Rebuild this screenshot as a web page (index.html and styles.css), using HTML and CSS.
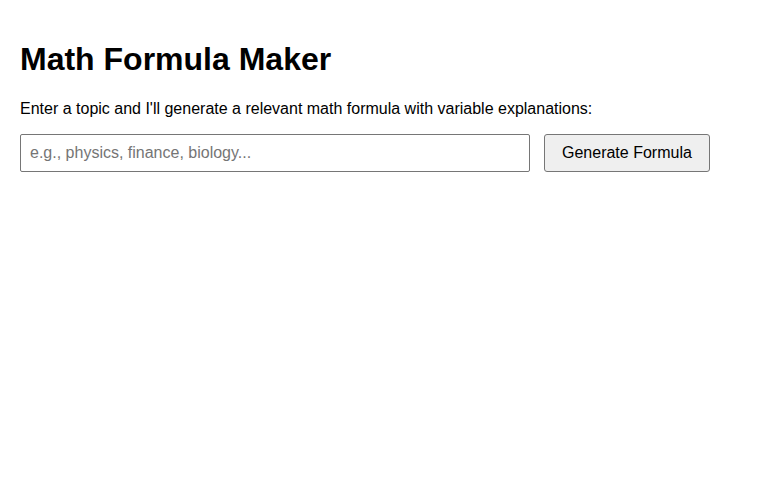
FILE: index.html
```html
<!DOCTYPE html>
<html lang="en">
<head>
<meta charset="utf-8">
<title>Math Formula Maker</title>
<link rel="stylesheet" href="styles.css">
</head>
<body>
<h1 class="title">Math Formula Maker</h1>
<p class="intro">Enter a topic and I'll generate a relevant math formula with variable explanations:</p>
<div class="form-row">
  <input class="topic-input" type="text" placeholder="e.g., physics, finance, biology...">
  <button class="generate-btn" type="button">Generate Formula</button>
</div>
</body>
</html>
```
FILE: styles.css
```css
html, body {
  background: #ffffff;
}
body {
  margin: 0;
  padding: 20px;
  font-family: "Liberation Sans", Arial, sans-serif;
  color: #000000;
}
.title {
  font-size: 32px;
  font-weight: bold;
  margin: 21.44px 0;
}
.intro {
  font-size: 16px;
  margin: 16px 0;
}
.form-row {
  display: flex;
  gap: 14px;
  align-items: center;
}
.topic-input {
  box-sizing: border-box;
  width: 510px;
  height: 38px;
  padding: 0 9px;
  border: 1px solid #767676;
  border-radius: 2px;
  font-family: "Liberation Sans", Arial, sans-serif;
  font-size: 16px;
  color: #000;
  background: #fff;
}
.topic-input::placeholder {
  color: #757575;
}
.generate-btn {
  box-sizing: border-box;
  height: 38px;
  padding: 0 17px;
  border: 1px solid #767676;
  border-radius: 3px;
  background: #efefef;
  font-family: "Liberation Sans", Arial, sans-serif;
  font-size: 16px;
  color: #000;
}
```
